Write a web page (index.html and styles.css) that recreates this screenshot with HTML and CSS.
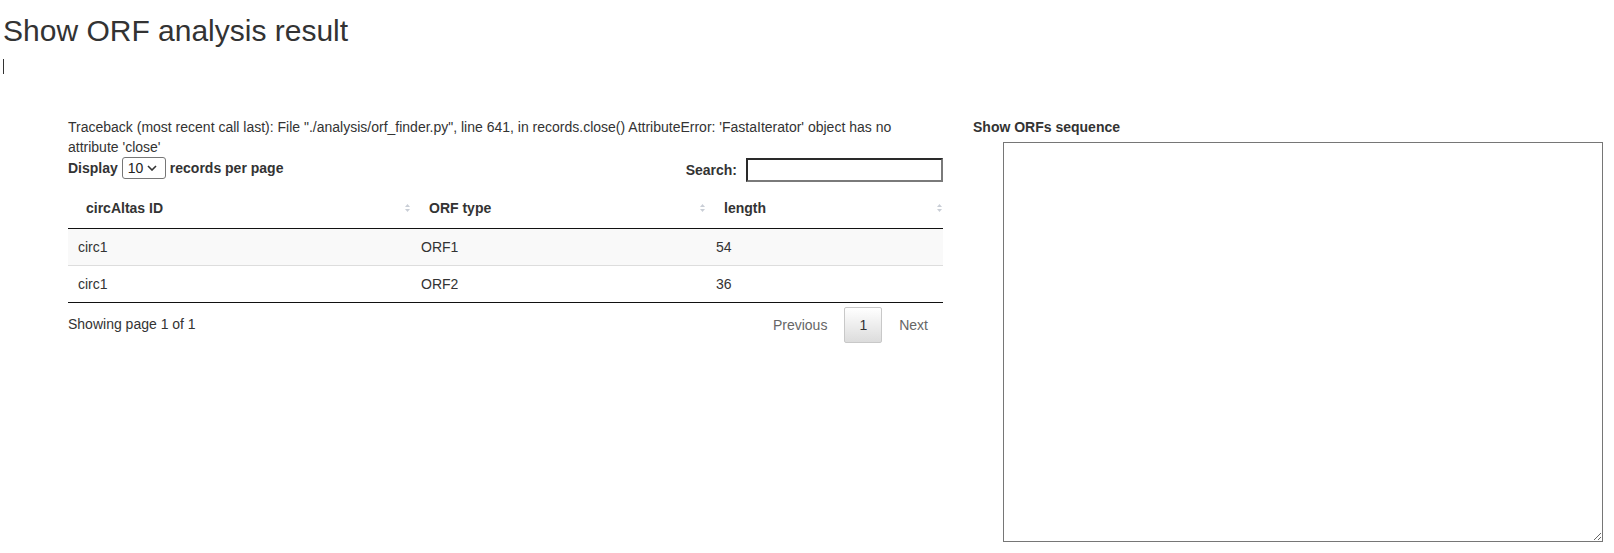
FILE: index.html
```html
<!DOCTYPE html>
<html lang="en">
<head>
<meta charset="utf-8">
<title>Show ORF analysis result</title>
<link rel="stylesheet" href="styles.css">
</head>
<body>
<header class="page-head">
  <h1 class="title">Show ORF analysis result</h1>
  <div class="caret"></div>
</header>
<main class="main">
  <section class="left">
    <p class="traceback">Traceback (most recent call last): File "./analysis/orf_finder.py", line 641, in records.close() AttributeError: 'FastaIterator' object has no attribute 'close'</p>
    <div class="controls">
      <label class="length">
        <span>Display</span>
        <span class="select-wrap"><select class="select"><option>10</option><option>25</option><option>50</option><option>100</option></select><svg class="chev" width="10" height="6" viewBox="0 0 10 6"><polyline points="1,1 5,5 9,1" fill="none" stroke="#333" stroke-width="1.6"/></svg></span>
        <span>records per page</span>
      </label>
      <label class="filter">
        <span>Search:</span>
        <input class="search" type="text">
      </label>
    </div>
    <table class="dt">
      <colgroup>
        <col class="c1"><col class="c2"><col class="c3">
      </colgroup>
      <thead>
        <tr>
          <th><div class="th-in"><span>circAltas ID</span><svg class="sort" width="5" height="8" viewBox="0 0 5 8"><polygon points="2.5,0 5,3 0,3"/><polygon points="0,5 5,5 2.5,8"/></svg></div></th>
          <th><div class="th-in"><span>ORF type</span><svg class="sort" width="5" height="8" viewBox="0 0 5 8"><polygon points="2.5,0 5,3 0,3"/><polygon points="0,5 5,5 2.5,8"/></svg></div></th>
          <th><div class="th-in"><span>length</span><svg class="sort" width="5" height="8" viewBox="0 0 5 8"><polygon points="2.5,0 5,3 0,3"/><polygon points="0,5 5,5 2.5,8"/></svg></div></th>
        </tr>
      </thead>
      <tbody>
        <tr class="odd"><td>circ1</td><td>ORF1</td><td>54</td></tr>
        <tr class="even"><td>circ1</td><td>ORF2</td><td>36</td></tr>
      </tbody>
    </table>
    <div class="table-foot">
      <div class="info">Showing page 1 of 1</div>
      <div class="paginate">
        <a class="pbtn disabled">Previous</a><a class="pbtn current">1</a><a class="pbtn disabled">Next</a>
      </div>
    </div>
  </section>
  <section class="right">
    <label class="seq-label">Show ORFs sequence</label>
    <textarea class="seq"></textarea>
  </section>
</main>
</body>
</html>
```

FILE: styles.css
```css
html, body {
  margin: 0;
  padding: 0;
  background: #fff;
}

body {
  font-family: "Liberation Sans", Arial, Helvetica, sans-serif;
  font-size: 14px;
  line-height: 20px;
  color: #333;
}

.page-head {
  padding-left: 3px;
}

.title {
  margin: 14px 0 0;
  font-size: 30px;
  line-height: 33px;
  font-weight: 500;
  color: #333;
}

.caret {
  margin-top: 12px;
  width: 0;
  height: 15px;
  border-left: 1px solid #333;
}

.main {
  display: flex;
  align-items: flex-start;
  padding: 43px 0 0 68px;
}

.left {
  width: 875px;
  flex: 0 0 875px;
}

.traceback {
  margin: 0;
  line-height: 20px;
}

.controls {
  display: flex;
  justify-content: space-between;
  align-items: flex-start;
  height: 31px;
}

.length,
.filter {
  display: flex;
  align-items: center;
  font-weight: bold;
}

.length {
  gap: 4px;
}

.filter {
  gap: 9px;
  padding-top: 1px;
}

.select-wrap {
  position: relative;
  display: flex;
  height: 22px;
}

.select {
  appearance: none;
  -webkit-appearance: none;
  box-sizing: border-box;
  width: 44px;
  height: 22px;
  margin: 0;
  padding: 0 0 0 5px;
  border: 1px solid #767676;
  border-radius: 3px;
  background: #fff;
  font-family: "Liberation Sans", Arial, sans-serif;
  font-size: 14px;
  color: #222;
  font-weight: normal;
}

.chev {
  position: absolute;
  left: 25px;
  top: 8px;
  pointer-events: none;
}

.search {
  box-sizing: border-box;
  width: 197px;
  height: 24px;
  margin: 0;
  padding: 1px 3px;
  border-width: 2px;
  border-style: solid;
  border-color: #2a2a2a #7a7a7a #7a7a7a #2a2a2a;
  border-radius: 0;
  background: #fff;
  font-family: "Liberation Sans", Arial, sans-serif;
  font-size: 14px;
  outline: none;
}

.dt {
  width: 875px;
  table-layout: fixed;
  border-collapse: separate;
  border-spacing: 0;
}

.dt .c1 { width: 343px; }
.dt .c2 { width: 295px; }
.dt .c3 { width: 237px; }

.dt th {
  padding: 10px 1px 10px 18px;
  text-align: left;
  font-weight: bold;
  line-height: 20px;
  border-bottom: 1px solid #111;
}

.th-in {
  display: flex;
  justify-content: space-between;
  align-items: center;
}

.sort {
  fill: #c9ced6;
  flex: none;
}

.dt td {
  padding: 8px 10px;
  line-height: 20px;
  border-top: 1px solid #ddd;
}

.dt tbody tr:first-child td {
  border-top: none;
}

.dt tbody tr:last-child td {
  border-bottom: 1px solid #111;
}

.dt tr.odd td {
  background: #f9f9f9;
}

.table-foot {
  display: flex;
  justify-content: space-between;
  align-items: flex-start;
}

.info {
  padding-top: 0.755em;
}

.paginate {
  padding-top: 0.25em;
  display: flex;
}

.pbtn {
  display: inline-block;
  box-sizing: border-box;
  min-width: 1.5em;
  padding: 7px 14px;
  margin-left: 2px;
  border: 1px solid transparent;
  border-radius: 2px;
  line-height: 20px;
  text-align: center;
  color: #333;
  cursor: default;
}

.pbtn.disabled {
  color: #666;
}

.pbtn.current {
  color: #333;
  border-color: #c8c8c8;
  background: linear-gradient(to bottom, #ffffff 0%, #dcdcdc 100%);
}

.right {
  display: flex;
  flex-direction: column;
  margin-left: 30px;
}

.seq-label {
  font-weight: bold;
  line-height: 20px;
  margin-bottom: 5px;
}

.seq {
  box-sizing: border-box;
  width: 600px;
  height: 400px;
  margin: 0 0 0 30px;
  padding: 2px;
  border: 1px solid #767676;
  border-radius: 0;
  resize: both;
  font-family: "Liberation Mono", monospace;
  font-size: 13px;
}
```
